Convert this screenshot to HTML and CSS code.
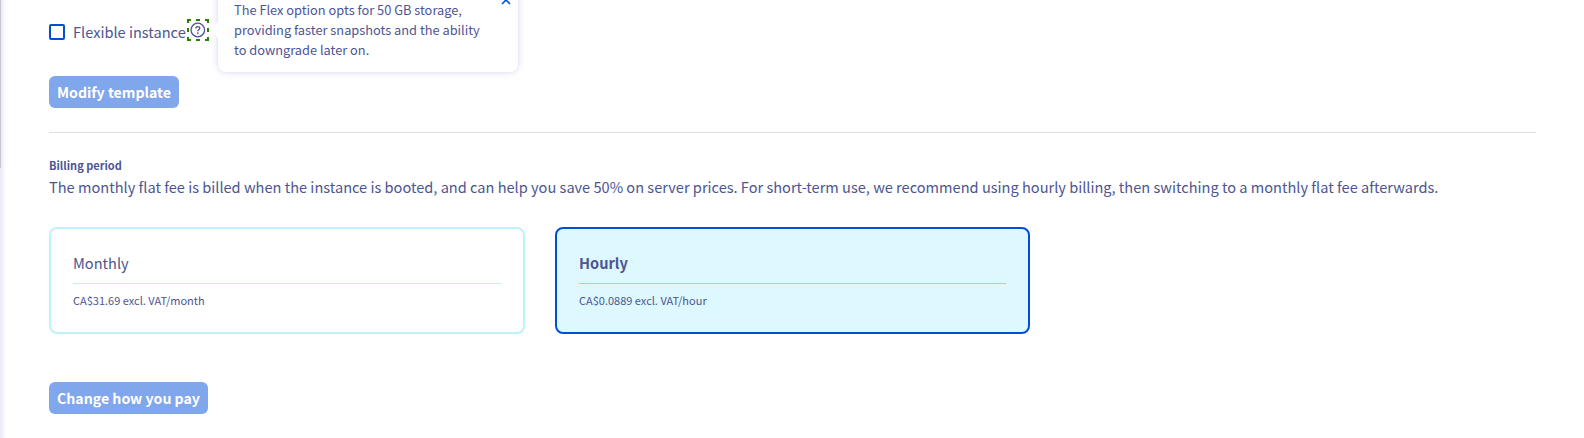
FILE: index.html
```html
<!DOCTYPE html>
<html lang="en">
<head>
<meta charset="utf-8">
<title>Instance configuration</title>
<link rel="stylesheet" href="styles.css">
</head>
<body>
<div class="page">
  <div class="rail"><div class="rail-thumb"></div></div>
  <main class="content">
    <div class="option">
      <span class="checkbox"></span>
      <span class="option-label">Flexible instance</span>
      <span class="help">
        <svg class="help-icon" viewBox="0 0 22 22" fill="none" stroke="#4d5592">
          <path d="M0 1h4M9 1h4M18 1h4M0 21h4M9 21h4M18 21h4M1 0v4M1 9v4M1 18v4M21 0v4M21 9v4M21 18v4" stroke="#2b8000" stroke-width="2"/>
          <circle cx="10.8" cy="11" r="6.8" stroke-width="1.3"/>
          <path d="M8.9 9.4C8.9 8.2 9.7 7.6 10.8 7.6s1.9.7 1.9 1.7c0 1.5-1.9 1.4-1.9 3" stroke-width="1.4"/>
          <circle cx="10.8" cy="14.1" r=".9" fill="#4d5592" stroke="none"/>
        </svg>
        <span class="popover">
          The Flex option opts for 50 GB storage,<br>providing faster snapshots and the ability<br>to downgrade later on.
          <svg class="close" viewBox="0 0 10 10" stroke="#0050d7" stroke-width="1.6"><path d="M1 1l8 8M9 1L1 9"/></svg>
        </span>
      </span>
    </div>
    <button class="button modify">Modify template</button>
    <hr class="divider">
    <h2 class="heading">Billing period</h2>
    <p class="description">The monthly flat fee is billed when the instance is booted, and can help you save 50% on server prices. For short-term use, we recommend using hourly billing, then switching to a monthly flat fee afterwards.</p>
    <div class="cards">
      <div class="card">
        <div class="card-title">Monthly</div>
        <div class="card-price">CA$31.69 excl. VAT/month</div>
      </div>
      <div class="card selected">
        <div class="card-title">Hourly</div>
        <div class="card-price">CA$0.0889 excl. VAT/hour</div>
      </div>
    </div>
    <button class="button pay">Change how you pay</button>
  </main>
</div>
</body>
</html>
```
FILE: styles.css
```css
* { box-sizing: border-box; }
body {
  margin: 0;
  background: #fff;
  color: #4d5592;
  font-family: "Noto Sans CJK SC", "Noto Sans", sans-serif;
  font-size: 14.58px;
  overflow: hidden;
}
.page { display: flex; height: 438px; }
.rail {
  width: 6px;
  margin-right: 43px;
  background: linear-gradient(to right, #ebebf5, #f0f0fa 40%, #fff);
}
.rail-thumb { width: 1px; height: 168px; background: #c6c6cf; }
.content { width: 1487px; display: flex; flex-direction: column; align-items: flex-start; }
.option { display: flex; align-items: center; height: 44px; margin-top: 10px; }
.checkbox { width: 16px; height: 16px; border: 2px solid #0050d7; border-radius: 2px; }
.option-label { width: 114px; margin-left: 8px; line-height: 24px; white-space: nowrap; }
.help {
  position: relative;
  width: 22px;
  height: 22px;
  margin-top: -4px;
}
.help-icon { display: block; width: 22px; height: 22px; }
.popover {
  position: absolute;
  left: 31px;
  bottom: -31px;
  width: 300px;
  height: 92px;
  padding: 20px 16px 12px;
  border-radius: 8px;
  background: #fff;
  box-shadow: 0 0 6px rgba(77, 85, 190, .25);
  font-size: 12.8px;
  line-height: 20px;
  white-space: nowrap;
}
.popover::before {
  content: "";
  position: absolute;
  left: -8px;
  bottom: 34px;
  border: 8px solid transparent;
  border-left: 0;
  border-right-color: #fff;
}
.close { position: absolute; right: 7px; top: 15px; width: 10px; height: 10px; }
.button {
  height: 32px;
  padding: 0;
  border: 0;
  border-radius: 6px;
  background: #80a6eb;
  color: #fff;
  font: bold 14.15px/32px "Noto Sans CJK SC", "Noto Sans", sans-serif;
  white-space: nowrap;
}
.modify { width: 130px; margin-top: 22px; }
.divider { width: 100%; height: 1px; margin: 24px 0 0; border: 0; background: #dedee4; }
.heading { margin: 24px 0 0; font-size: 11px; line-height: 16px; }
.description { margin: 2px 0 0; line-height: 24px; white-space: nowrap; }
.cards { display: flex; gap: 30px; margin-top: 28px; }
.card {
  width: 476px;
  height: 107px;
  padding: 22px;
  border: 2px solid #bef1ff;
  border-radius: 8px;
}
.card-title { height: 33px; border-bottom: 1px solid #bef1ff; line-height: 24px; }
.card-price { margin-top: 6px; font-size: 11px; line-height: 20px; }
.selected { width: 475px; background: #def8ff; border-color: #0050d7; }
.selected .card-title { border-color: #85d9fd; font-weight: bold; }
.pay { width: 159px; margin-top: 48px; }
```
